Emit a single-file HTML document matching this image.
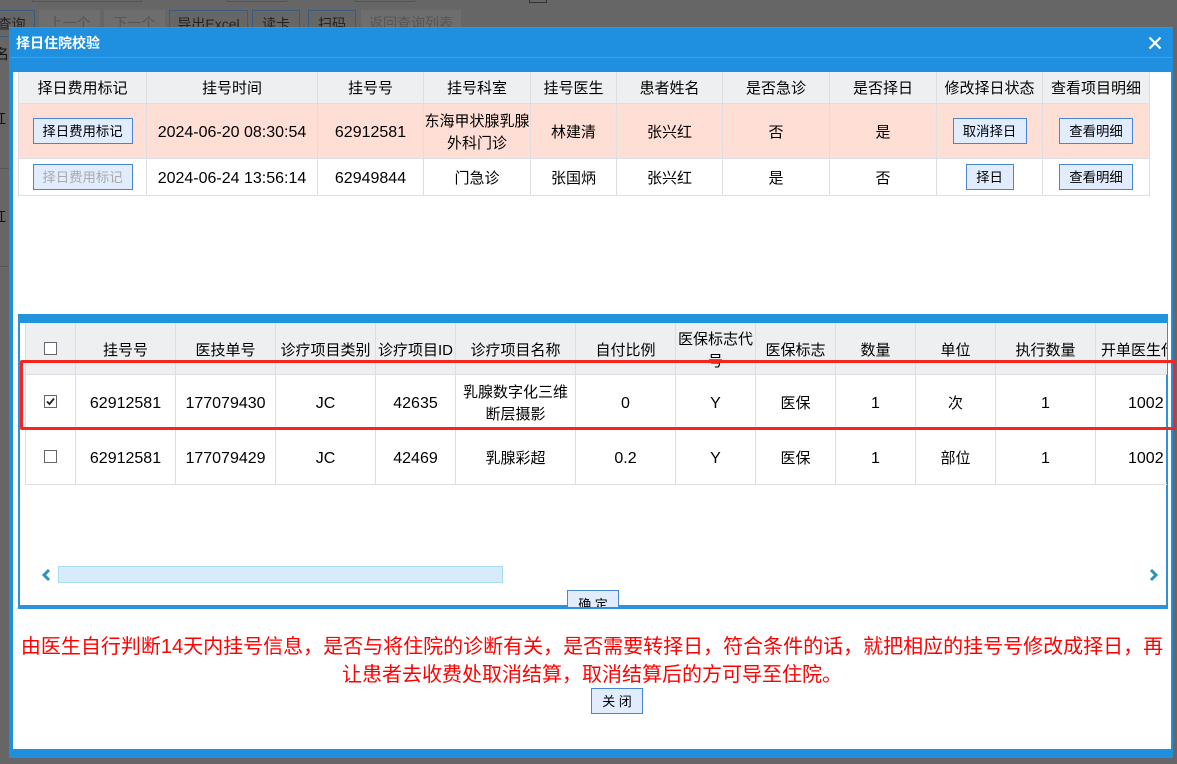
<!DOCTYPE html>
<html><head><meta charset="utf-8">
<style>
html,body{margin:0;padding:0;width:1177px;height:764px;overflow:hidden;background:#666;}
body{position:relative;font-family:"Liberation Sans","Noto Sans CJK SC",sans-serif;font-size:15px;color:#000;}
.a{position:absolute;box-sizing:border-box;}
.bg{background:#666;border:1px solid #555;color:#222;text-align:center;line-height:26px;height:27px;top:10px;font-size:14px;}
.dis{background:#6e6e6e;border:none;color:#555;}
.c{position:absolute;box-sizing:border-box;display:flex;align-items:center;justify-content:center;text-align:center;border-right:1px solid #dcdee2;border-bottom:1px solid #dcdee2;line-height:22px;overflow:hidden;white-space:nowrap;}
.w{white-space:normal;padding-top:3px;}
.n{font-size:16px;padding-top:3px;}
.z{padding-top:3px;}
.y{padding-top:4px;}
.h{background:#eeeff1;}
.t1{padding-top:2px;}
.t2{align-items:flex-start;padding-top:17px;}
.p{background:#ffdfd5;}
.btn{display:inline-block;box-sizing:border-box;height:26px;line-height:25px;background:#e1ecff;border:1px solid #4a86cf;text-align:center;font-size:13.4px;}
.cb{display:block;box-sizing:border-box;width:13px;height:13px;border:1px solid #666;background:#fff;position:relative;}
.cu{margin-top:-1px;}
</style></head><body>
<!-- background page -->
<div class="a" style="left:32px;top:-8px;width:110px;height:10px;border:1px solid #555"></div>
<div class="a" style="left:227px;top:-8px;width:60px;height:10px;border:1px solid #555"></div>
<div class="a" style="left:355px;top:-8px;width:60px;height:10px;border:1px solid #555"></div>
<div class="a" style="left:529px;top:-8px;width:18px;height:11px;border:1px solid #333"></div>
<div class="a bg" style="left:-12px;width:47px;border-color:#3b5a80">查询</div>
<div class="a bg dis" style="left:39px;width:61px;">上一个</div>
<div class="a bg dis" style="left:104px;width:61px;">下一个</div>
<div class="a bg" style="left:169px;width:79px;border-color:#3b5a80">导出Excel</div>
<div class="a bg" style="left:252px;width:48px;border-color:#3b5a80">读卡</div>
<div class="a bg" style="left:308px;width:48px;border-color:#3b5a80">扫码</div>
<div class="a bg dis" style="left:361px;width:100px;">返回查询列表</div>
<div class="a" style="left:-5px;top:44px;width:16px;height:20px;color:#111;font-size:14px;">名</div>
<div class="a" style="left:-8px;top:109px;width:16px;height:20px;color:#111;font-size:14px;">红</div>
<div class="a" style="left:-8px;top:207px;width:16px;height:20px;color:#111;font-size:14px;">红</div>
<div class="a" style="left:0;top:168px;width:9px;height:1px;background:#555"></div>
<div class="a" style="left:0;top:266px;width:9px;height:1px;background:#555"></div>

<!-- modal -->
<div class="a" style="left:9px;top:27px;width:1164px;height:731px;background:#1e90df;border-top:1px solid #4a90c8;"></div>
<div class="a" style="left:11px;top:57px;width:1161px;height:1px;background:#4a9fd8"></div>
<div class="a" style="left:13px;top:72px;width:1158px;height:677px;background:#fff"></div>
<div class="a" style="left:16px;top:34px;color:#fff;font-weight:bold;font-size:14px;line-height:18px;">择日住院校验</div>
<svg class="a" style="left:1148px;top:36px" width="14" height="14" viewBox="0 0 14 14"><path d="M1.5 1.5L12.5 12.5M12.5 1.5L1.5 12.5" stroke="#fff" stroke-width="2.2" fill="none"/></svg>

<!-- table 1 -->
<div class="a" style="left:18px;top:72px;width:1px;height:124px;background:#dcdee2"></div>
<div class="c h t1" style="left:19px;top:72px;width:128px;height:32px">择日费用标记</div>
<div class="c h t1" style="left:147px;top:72px;width:171px;height:32px">挂号时间</div>
<div class="c h t1" style="left:318px;top:72px;width:106px;height:32px">挂号号</div>
<div class="c h t1" style="left:424px;top:72px;width:107px;height:32px">挂号科室</div>
<div class="c h t1" style="left:531px;top:72px;width:86px;height:32px">挂号医生</div>
<div class="c h t1" style="left:617px;top:72px;width:106px;height:32px">患者姓名</div>
<div class="c h t1" style="left:723px;top:72px;width:107px;height:32px">是否急诊</div>
<div class="c h t1" style="left:830px;top:72px;width:107px;height:32px">是否择日</div>
<div class="c h t1" style="left:937px;top:72px;width:106px;height:32px">修改择日状态</div>
<div class="c h t1" style="left:1043px;top:72px;width:107px;height:32px">查看项目明细</div>

<div class="c p" style="left:19px;top:104px;width:128px;height:55px"><span class="btn" style="width:100px">择日费用标记</span></div>
<div class="c p n" style="left:147px;top:104px;width:171px;height:55px">2024-06-20 08:30:54</div>
<div class="c p n" style="left:318px;top:104px;width:106px;height:55px">62912581</div>
<div class="c p w" style="left:424px;top:104px;width:107px;height:55px">东海甲状腺乳腺<br>外科门诊</div>
<div class="c p y" style="left:531px;top:104px;width:86px;height:55px">林建清</div>
<div class="c p y" style="left:617px;top:104px;width:106px;height:55px">张兴红</div>
<div class="c p y" style="left:723px;top:104px;width:107px;height:55px">否</div>
<div class="c p y" style="left:830px;top:104px;width:107px;height:55px">是</div>
<div class="c p" style="left:937px;top:104px;width:106px;height:55px"><span class="btn" style="width:74px">取消择日</span></div>
<div class="c p" style="left:1043px;top:104px;width:107px;height:55px"><span class="btn" style="width:74px">查看明细</span></div>

<div class="c" style="left:19px;top:159px;width:128px;height:37px"><span class="btn" style="width:100px;color:#aaa">择日费用标记</span></div>
<div class="c n" style="left:147px;top:159px;width:171px;height:37px">2024-06-24 13:56:14</div>
<div class="c n" style="left:318px;top:159px;width:106px;height:37px">62949844</div>
<div class="c z" style="left:424px;top:159px;width:107px;height:37px;">门急诊</div>
<div class="c z" style="left:531px;top:159px;width:86px;height:37px;">张国炳</div>
<div class="c z" style="left:617px;top:159px;width:106px;height:37px;">张兴红</div>
<div class="c z" style="left:723px;top:159px;width:107px;height:37px;">是</div>
<div class="c z" style="left:830px;top:159px;width:107px;height:37px;">否</div>
<div class="c" style="left:937px;top:159px;width:106px;height:37px"><span class="btn" style="width:48px">择日</span></div>
<div class="c" style="left:1043px;top:159px;width:107px;height:37px"><span class="btn" style="width:74px">查看明细</span></div>

<!-- panel -->
<div class="a" style="left:18px;top:314px;width:1150px;height:295px;border:2px solid #2a93dc;border-top:9px solid #2193dd;border-bottom:4px solid #2a93dc;background:#fff"></div>
<div class="a" style="left:25px;top:323px;width:1142px;height:162px;overflow:hidden;">
<div class="a" style="left:0;top:0;width:1px;height:162px;background:#dcdee2"></div>
<div class="c h" style="left:1px;top:0;width:50px;height:52px;"><span class="cb cu"></span></div>
<div class="c h t2" style="left:51px;top:0;width:100px;height:52px;">挂号号</div>
<div class="c h t2" style="left:151px;top:0;width:100px;height:52px;">医技单号</div>
<div class="c h t2" style="left:251px;top:0;width:100px;height:52px;">诊疗项目类别</div>
<div class="c h t2" style="left:351px;top:0;width:80px;height:52px;">诊疗项目ID</div>
<div class="c h t2" style="left:431px;top:0;width:120px;height:52px;">诊疗项目名称</div>
<div class="c h t2" style="left:551px;top:0;width:100px;height:52px;">自付比例</div>
<div class="c h" style="white-space:normal;left:651px;top:0;width:80px;height:52px;align-items:flex-start;padding-top:6px;">医保标志代<br>号</div>
<div class="c h t2" style="left:731px;top:0;width:80px;height:52px;">医保标志</div>
<div class="c h t2" style="left:811px;top:0;width:80px;height:52px;">数量</div>
<div class="c h t2" style="left:891px;top:0;width:80px;height:52px;">单位</div>
<div class="c h t2" style="left:971px;top:0;width:100px;height:52px;">执行数量</div>
<div class="c h t2" style="left:1071px;top:0;width:100px;height:52px;justify-content:flex-start;padding-left:5px">开单医生代</div>

<div class="c" style="left:1px;top:52px;width:50px;height:55px"><span class="cb cu"><svg style="position:absolute;left:0;top:0" width="11" height="11" viewBox="0 0 11 11"><path d="M2 5.5L4.5 8L9 2.5" stroke="#222" stroke-width="1.8" fill="none"/></svg></span></div>
<div class="c n" style="left:51px;top:52px;width:100px;height:55px">62912581</div>
<div class="c n" style="left:151px;top:52px;width:100px;height:55px">177079430</div>
<div class="c n" style="left:251px;top:52px;width:100px;height:55px">JC</div>
<div class="c n" style="left:351px;top:52px;width:80px;height:55px">42635</div>
<div class="c w" style="left:431px;top:52px;width:120px;height:55px">乳腺数字化三维<br>断层摄影</div>
<div class="c n" style="left:551px;top:52px;width:100px;height:55px">0</div>
<div class="c n" style="left:651px;top:52px;width:80px;height:55px">Y</div>
<div class="c z" style="left:731px;top:52px;width:80px;height:55px;">医保</div>
<div class="c n" style="left:811px;top:52px;width:80px;height:55px">1</div>
<div class="c z" style="left:891px;top:52px;width:80px;height:55px;">次</div>
<div class="c n" style="left:971px;top:52px;width:100px;height:55px">1</div>
<div class="c n" style="left:1071px;top:52px;width:100px;height:55px;justify-content:flex-start;padding-left:32px">1002</div>

<div class="c" style="left:1px;top:107px;width:50px;height:55px"><span class="cb cu"></span></div>
<div class="c n" style="left:51px;top:107px;width:100px;height:55px">62912581</div>
<div class="c n" style="left:151px;top:107px;width:100px;height:55px">177079429</div>
<div class="c n" style="left:251px;top:107px;width:100px;height:55px">JC</div>
<div class="c n" style="left:351px;top:107px;width:80px;height:55px">42469</div>
<div class="c z" style="left:431px;top:107px;width:120px;height:55px;">乳腺彩超</div>
<div class="c n" style="left:551px;top:107px;width:100px;height:55px">0.2</div>
<div class="c n" style="left:651px;top:107px;width:80px;height:55px">Y</div>
<div class="c z" style="left:731px;top:107px;width:80px;height:55px;">医保</div>
<div class="c n" style="left:811px;top:107px;width:80px;height:55px">1</div>
<div class="c z" style="left:891px;top:107px;width:80px;height:55px;">部位</div>
<div class="c n" style="left:971px;top:107px;width:100px;height:55px">1</div>
<div class="c n" style="left:1071px;top:107px;width:100px;height:55px;justify-content:flex-start;padding-left:32px">1002</div>
</div>

<!-- red rectangle -->
<div class="a" style="left:20px;top:360px;width:1156px;height:70px;border:3px solid #f5261f;border-radius:2px;"></div>

<!-- scrollbar -->
<svg class="a" style="left:40px;top:568px" width="12" height="14" viewBox="0 0 12 14"><path d="M9 2L4 7L9 12" stroke="#2a93c0" stroke-width="3" fill="none"/></svg>
<div class="a" style="left:58px;top:566px;width:445px;height:17px;background:#d6ecfb;border:1px solid #aadcf0"></div>
<svg class="a" style="left:1148px;top:568px" width="12" height="14" viewBox="0 0 12 14"><path d="M3 2L8 7L3 12" stroke="#2a93c0" stroke-width="3" fill="none"/></svg>

<!-- confirm button -->
<div class="a" style="left:567px;top:590px;width:52px;height:18px;background:#e1ecff;border:1px solid #4a86cf;border-bottom:none;overflow:hidden;text-align:center;font-size:13px;line-height:28px;">确 定</div>
<div class="a" style="left:567px;top:607px;width:52px;height:1px;background:#4a86cf"></div>

<!-- red note -->
<div class="a" style="left:13px;top:633px;width:1158px;text-align:center;color:#f00;font-size:20px;line-height:28px;white-space:nowrap;">由医生自行判断14天内挂号信息，是否与将住院的诊断有关，是否需要转择日，符合条件的话，就把相应的挂号号修改成择日，再<br>让患者去收费处取消结算，取消结算后的方可导至住院。</div>

<div class="a btn" style="left:591px;top:688px;width:52px;font-size:13px;line-height:26px;">关 闭</div>
</body></html>
